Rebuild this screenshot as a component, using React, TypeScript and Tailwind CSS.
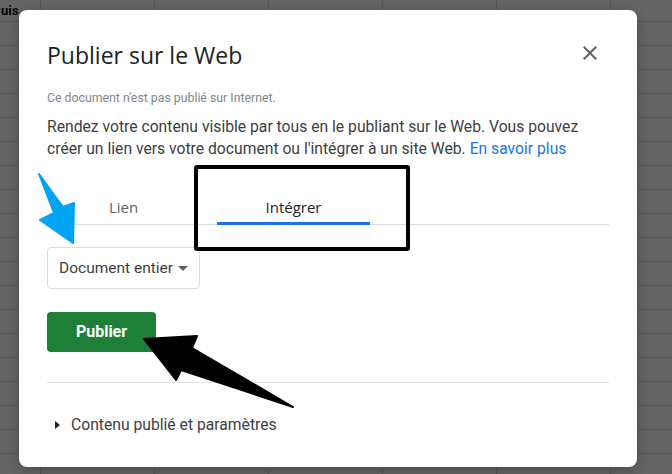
import React from 'react';

function CloseIcon() {
  return (
    <svg width="24" height="24" viewBox="0 0 24 24" className="fill-[#5f6368]">
      <path d="M19 6.41L17.59 5 12 10.59 6.41 5 5 6.41 10.59 12 5 17.59 6.41 19 12 13.41 17.59 19 19 17.59 13.41 12z" />
    </svg>
  );
}

export default function App() {
  return (
    <div className="relative w-[672px] h-[474px] overflow-hidden bg-[#646464] bg-[linear-gradient(to_right,#575757_1px,transparent_1px),linear-gradient(to_bottom,#575757_1px,transparent_1px)] bg-[size:114px_24px] bg-[position:40px_21px] font-[Roboto,sans-serif]">
      {/* Sheet cell text behind the modal */}
      <div className="pt-[2px] pl-[1px] text-[13px] leading-[18px] font-bold text-black">uis</div>

      {/* Publish dialog */}
      <div className="absolute left-[19px] top-[10px] w-[618px] h-[457px] bg-white rounded-lg shadow-[0_4px_12px_rgba(0,0,0,0.25)] px-[28px] pt-[31px]">
        <div className="flex items-start justify-between">
          <h1 className="font-['Open_Sans',sans-serif] text-[23px] leading-[28px] text-[#202124]">Publier sur le Web</h1>
          <div className="mr-[7px]">
            <CloseIcon />
          </div>
        </div>

        <p className="mt-[21px] text-[12.3px] leading-[16px] text-[#80868b]">Ce document n'est pas publié sur Internet.</p>

        <p className="mt-[10px] text-[15.7px] leading-[22px] text-[#3c4043]">
          Rendez votre contenu visible par tous en le publiant sur le Web. Vous pouvez
          <br />
          créer un lien vers votre document ou l'intégrer à un site Web.{' '}
          <span className="text-[#1a73e8]">En savoir plus</span>
        </p>

        {/* Tabs */}
        <div className="mt-[36px] flex gap-[17px] border-b border-[#dadce0] font-['Open_Sans',sans-serif]">
          <div className="-mb-px w-[153px] pb-[4px] border-b-[3px] border-transparent text-center text-[15px] leading-[22px] font-medium text-[#5f6368]">
            Lien
          </div>
          <div className="-mb-px w-[153px] pb-[4px] border-b-[3px] border-[#1a73e8] text-center text-[15px] leading-[22px] font-medium text-[#202124]">
            Intégrer
          </div>
        </div>

        {/* Range select */}
        <div className="mt-[22px] w-[153px] h-[42px] flex items-center border border-[#dadce0] rounded pl-[11px] text-[15.5px] leading-[20px] text-[#3c4043]">
          Document entier
          <svg width="10" height="5" viewBox="0 0 10 5" className="ml-[5px] fill-[#5f6368]">
            <polygon points="0,0 10,0 5,5" />
          </svg>
        </div>

        <button className="mt-[23px] w-[109px] h-[40px] rounded bg-[#1e8038] text-white text-[16px] leading-[20px] font-bold">
          Publier
        </button>

        <div className="mt-[30px] h-px bg-[#e3e3e3]" />

        <div className="mt-[32px] flex items-center text-[15.7px] leading-[20px] text-[#3c4043]">
          <svg width="5" height="8" viewBox="0 0 5 8" className="ml-[8px] mr-[11px] fill-[#202124]">
            <polygon points="0,0 5,4 0,8" />
          </svg>
          Contenu publié et paramètres
        </div>
      </div>

      {/* Annotation overlays */}
      <div className="absolute left-[194px] top-[165px] w-[216px] h-[86px] border-4 border-black rounded-[3px]" />
      <svg width="672" height="474" viewBox="0 0 672 474" className="absolute left-0 top-0 pointer-events-none">
        <polygon
          points="39,174 63,207 74,203 73,243 40,220 54,213"
          fill="#00a4f2"
          stroke="#00a4f2"
          strokeWidth="2"
          strokeLinejoin="round"
        />
        <polygon
          points="144,339 197,336 192,348 293,407 181,370 176,380"
          fill="#000"
          stroke="#000"
          strokeWidth="2"
          strokeLinejoin="round"
        />
      </svg>
    </div>
  );
}
